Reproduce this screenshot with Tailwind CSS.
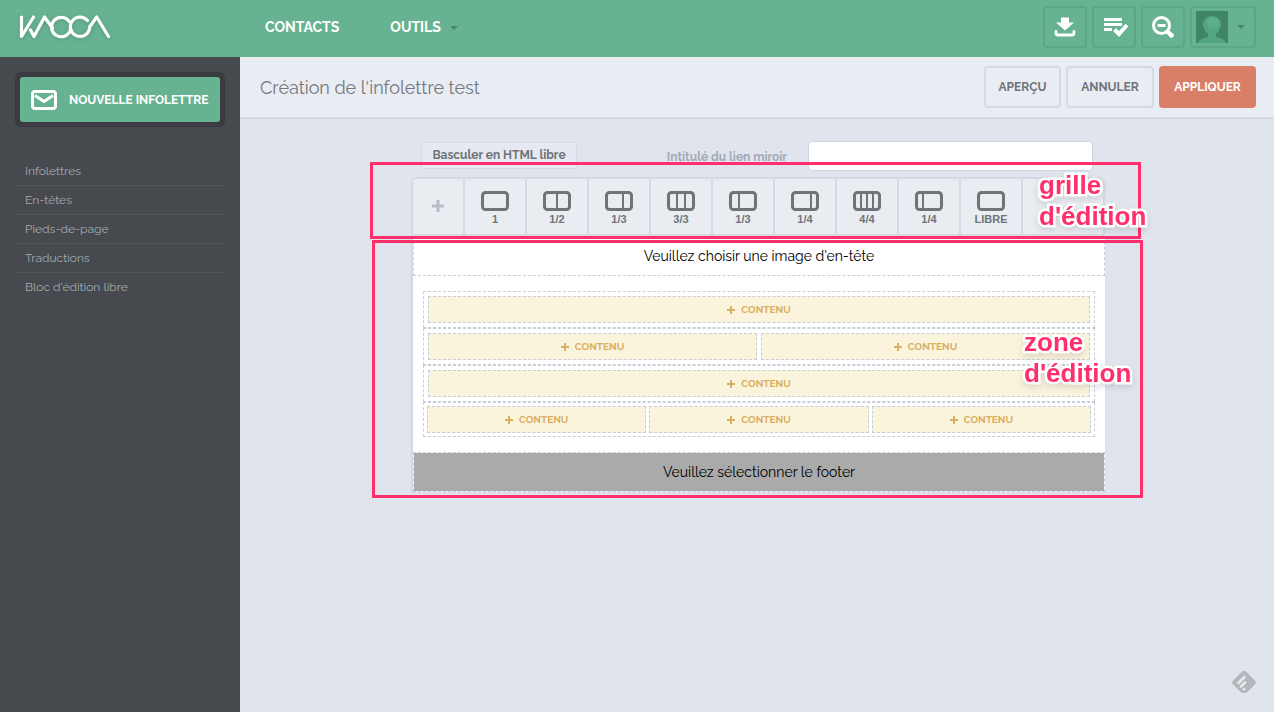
<!DOCTYPE html>
<html lang="fr">

<head>
    <meta charset="UTF-8">
    <meta name="viewport" content="width=device-width, initial-scale=1.0">
    <title>Création de l'infolettre | Kacoa</title>
    <script src="https://cdn.jsdelivr.net/npm/@tailwindcss/browser@4"></script>
</head>

<body class="min-h-screen flex flex-col bg-[#e0e4ec] font-['Raleway','Lato',sans-serif]">
    <!-- Top bar -->
    <header class="h-[57px] shrink-0 flex items-center bg-[#67b391] text-white pr-[18px]">
        <a href="#" aria-label="Kacoa" class="w-60 pl-[18px] mb-1 shrink-0">
            <svg class="w-24 h-7 drop-shadow-sm" viewBox="18 12 96 28" fill="none" stroke="currentColor"
                stroke-width="3.2" stroke-linecap="round" stroke-linejoin="round">
                <path d="M21.500 16v19.500L33.500 16M30.500 29l3.500 6.500L44.500 16l8 11" />
                <path d="M69.200 20.500A9.700 9.700 0 1 0 70.700 28" />
                <path d="M87.500 19.500A9.700 9.700 0 1 0 89.600 27.500V26L96.700 16l11.800 19.500" />
            </svg>
        </a>
        <nav class="flex-1 flex items-center gap-[51px] pl-[25px] pb-[2px] text-[14px] font-bold">
            <a href="#">CONTACTS</a>
            <a href="#" class="flex items-center gap-[9px]">OUTILS
                <svg class="w-2 h-1 text-[#438a69]" viewBox="0 0 8 4" fill="currentColor"><path d="M0 0h8L4 4z" /></svg>
            </a>
        </nav>
        <div class="flex gap-[5px] -mt-[3px]">
            <button aria-label="Télécharger" class="w-11 h-[42px] flex items-center justify-center rounded border-2 border-[#5ca783]">
                <svg class="w-[22px] h-5" viewBox="0 0 22 20" fill="currentColor">
                    <path d="M7 0.500h8v5h5L11 13.500 2 5.500h5z" />
                    <path d="M2 14.500v1.500a2 2 0 0 0 2 2h14a2 2 0 0 0 2-2v-1.500" fill="none" stroke="currentColor" stroke-width="2.800" stroke-linecap="round" />
                </svg>
            </button>
            <button aria-label="Tâches" class="w-11 h-[42px] flex items-center justify-center pl-[3px] rounded border-2 border-[#5ca783]">
                <svg class="w-[26px] h-5" viewBox="0 0 26 20" fill="currentColor">
                    <path d="M1 1h18v3H1zM1 6h18v3H1zM1 11h8v3H1z" />
                    <path d="M11.500 12.500l4.500 4.500 8-9" fill="none" stroke="currentColor" stroke-width="4" />
                </svg>
            </button>
            <button aria-label="Rechercher" class="w-11 h-[42px] flex items-center justify-center rounded border-2 border-[#5ca783]">
                <svg class="w-[22px] h-[22px]" viewBox="0 0 22 22" fill="none" stroke="currentColor">
                    <circle cx="9.500" cy="9.500" r="8" stroke-width="3" />
                    <path d="M5.500 9.500h8" stroke-width="3" />
                    <path d="M15.500 15.500l5.500 5.500" stroke-width="4.500" />
                </svg>
            </button>
            <button aria-label="Mon compte" class="w-[66px] h-[42px] flex items-center gap-[9px] pl-1 rounded border-2 border-[#5ca783]">
                <svg class="w-8 h-8" viewBox="0 0 32 32">
                    <path fill="#3f8565" d="M0 0h32v32H0z" />
                    <path fill="#53a682" d="M2 32c2-4 6-5 10-6v-3c-3-3-5-6-5-10a9 8 0 0 1 18 0c0 4-2 7-5 10v3c4 1 8 2 10 6z" />
                    <circle cx="17" cy="12" r="6" fill="#5dae8b" />
                </svg>
                <svg class="w-2 h-1 text-[#438a69]" viewBox="0 0 8 4" fill="currentColor"><path d="M0 0h8L4 4z" /></svg>
            </button>
        </div>
    </header>

    <div class="flex-1 flex">
        <!-- Sidebar -->
        <aside class="w-60 shrink-0 bg-[#46494e] p-[15px]">
            <div class="rounded-md bg-[#3b3c41] p-[5px]">
                <button class="w-full h-[45px] flex items-center gap-3 pl-[11px] rounded-[3px] bg-[#67b391] text-white text-[12px] font-bold whitespace-nowrap">
                    <svg class="w-[26px] h-5 shrink-0" viewBox="0 0 26 20" fill="none" stroke="currentColor" stroke-width="3" stroke-linejoin="round">
                        <rect x="1.500" y="1.500" width="23" height="17" rx="2.500" />
                        <path d="M4 5.500l9 6 9-6" />
                    </svg>
                    NOUVELLE INFOLETTRE
                </button>
            </div>
            <nav class="mt-[30px] flex flex-col divide-y divide-[#505358] text-[12px] leading-7 text-[#a5a9ae]">
                <a href="#" class="px-[10px]">Infolettres</a>
                <a href="#" class="px-[10px]">En-têtes</a>
                <a href="#" class="px-[10px]">Pieds-de-page</a>
                <a href="#" class="px-[10px]">Traductions</a>
                <a href="#" class="px-[10px]">Bloc d'édition libre</a>
            </nav>
        </aside>

        <main class="flex-1 min-w-0">
            <div class="h-[62px] flex items-center justify-between pl-5 pr-[18px] bg-[#e9ecf2] border-b-2 border-[#d3dae3]">
                <h1 class="text-[18px] text-[#75797d]">Création de l'infolettre test</h1>
                <div class="flex gap-[5px] text-[12px] font-bold text-[#6f7478]">
                    <button class="w-[77px] h-[42px] rounded border-2 border-[#d3dae3]">APERÇU</button>
                    <button class="w-[88px] h-[42px] rounded border-2 border-[#d3dae3]">ANNULER</button>
                    <button class="w-[97px] h-[42px] rounded bg-[#da7f67] text-white">APPLIQUER</button>
                </div>
            </div>

            <div class="pl-0.5 pt-[22px]">
                <div class="w-[694px] mx-auto">
                    <div class="flex items-center pl-[10px] pr-3 text-[12px] font-bold">
                        <button class="w-[156px] h-[27px] -mt-px pb-[2px] border border-[#d3dae3] bg-[#e6e9f1] text-[#6f7478]">Basculer en HTML libre</button>
                        <label for="mirror" class="ml-auto mr-[21px] mt-[2px] text-[#a3abb6]">Intitulé du lien miroir</label>
                        <input id="mirror" type="text" class="w-[285px] h-[30px] px-2 rounded border border-[#ccd6e3] bg-white">
                    </div>

                    <!-- Layout picker -->
                    <section class="relative mt-[6px]">
                        <div class="h-[59px] flex rounded-t-md border-2 border-[#d3dae3] bg-[#e9edf2] divide-x-2 divide-[#d3dae3] font-['Liberation_Sans',sans-serif] text-[11px] leading-3 font-bold text-[#6f7478]">
                            <button aria-label="Ajouter" class="w-[52px] flex items-center justify-center pb-px text-[#b6bec9]">
                                <svg class="w-3 h-3" viewBox="0 0 12 12" stroke="currentColor" stroke-width="3"><path d="M6 0v12M0 6h12" /></svg>
                            </button>
                            <button class="w-[62px] flex flex-col items-center justify-center gap-[2px] pt-[3px]">
                                <svg class="w-7 h-5" viewBox="0 0 28 20" fill="none" stroke="currentColor" stroke-width="3"><rect x="1.500" y="1.500" width="25" height="17" rx="3" /></svg>
                                1
                            </button>
                            <button class="w-[62px] flex flex-col items-center justify-center gap-[2px] pt-[3px]">
                                <svg class="w-7 h-5" viewBox="0 0 28 20" fill="none" stroke="currentColor" stroke-width="3"><rect x="1.500" y="1.500" width="25" height="17" rx="3" /><path d="M14 2v16" stroke-width="2" /></svg>
                                1/2
                            </button>
                            <button class="w-[62px] flex flex-col items-center justify-center gap-[2px] pt-[3px]">
                                <svg class="w-7 h-5" viewBox="0 0 28 20" fill="none" stroke="currentColor" stroke-width="3"><rect x="1.500" y="1.500" width="25" height="17" rx="3" /><path d="M18 2v16" stroke-width="2" /></svg>
                                1/3
                            </button>
                            <button class="w-[62px] flex flex-col items-center justify-center gap-[2px] pt-[3px]">
                                <svg class="w-7 h-5" viewBox="0 0 28 20" fill="none" stroke="currentColor" stroke-width="3"><rect x="1.500" y="1.500" width="25" height="17" rx="3" /><path d="M10 2v16M18 2v16" stroke-width="2" /></svg>
                                3/3
                            </button>
                            <button class="w-[62px] flex flex-col items-center justify-center gap-[2px] pt-[3px]">
                                <svg class="w-7 h-5" viewBox="0 0 28 20" fill="none" stroke="currentColor" stroke-width="3"><rect x="1.500" y="1.500" width="25" height="17" rx="3" /><path d="M10 2v16" stroke-width="2" /></svg>
                                1/3
                            </button>
                            <button class="w-[62px] flex flex-col items-center justify-center gap-[2px] pt-[3px]">
                                <svg class="w-7 h-5" viewBox="0 0 28 20" fill="none" stroke="currentColor" stroke-width="3"><rect x="1.500" y="1.500" width="25" height="17" rx="3" /><path d="M20 2v16" stroke-width="2" /></svg>
                                1/4
                            </button>
                            <button class="w-[62px] flex flex-col items-center justify-center gap-[2px] pt-[3px]">
                                <svg class="w-7 h-5" viewBox="0 0 28 20" fill="none" stroke="currentColor" stroke-width="3"><rect x="1.500" y="1.500" width="25" height="17" rx="3" /><path d="M8 2v16M14 2v16M20 2v16" stroke-width="2" /></svg>
                                4/4
                            </button>
                            <button class="w-[62px] flex flex-col items-center justify-center gap-[2px] pt-[3px]">
                                <svg class="w-7 h-5" viewBox="0 0 28 20" fill="none" stroke="currentColor" stroke-width="3"><rect x="1.500" y="1.500" width="25" height="17" rx="3" /><path d="M8 2v16" stroke-width="2" /></svg>
                                1/4
                            </button>
                            <button class="w-[62px] flex flex-col items-center justify-center gap-[2px] pt-[3px]">
                                <svg class="w-7 h-5" viewBox="0 0 28 20" fill="none" stroke="currentColor" stroke-width="3"><rect x="1.500" y="1.500" width="25" height="17" rx="3" /></svg>
                                LIBRE
                            </button>
                            <div class="flex-1"></div>
                        </div>
                        <!-- Annotation -->
                        <div class="absolute z-10 -top-[15px] -left-[41px] -right-[36px] h-[77px] border-3 border-[#ff2f6c] pointer-events-none"></div>
                        <p class="absolute z-20 -top-[7px] left-[628px] font-['Liberation_Sans',sans-serif] text-[26px] leading-[31px] font-bold whitespace-nowrap text-[#ff2f6c] [-webkit-text-stroke:5px_white] [paint-order:stroke_fill] drop-shadow-md">grille<br>d'édition</p>
                    </section>

                    <!-- Newsletter -->
                    <section class="relative">
                        <div class="bg-white border-l-2 border-[#d3dae3] text-[14px] text-black shadow-xs">
                            <div class="h-10 flex items-center justify-center pt-[2px] border border-t-0 border-dashed border-[#c5ced9]">Veuillez choisir une image d'en-tête</div>
                            <div class="px-[10px] py-[15px] text-[10px] font-bold text-[#d9ae5f]">
                                <div class="flex gap-1 p-1 border border-dashed border-[#c5ced9]">
                                    <button class="flex-1 h-[27px] flex items-center justify-center gap-[6px] border border-dashed border-[#c5ced9] bg-[#fbf4dd]"><svg class="w-2 h-2" viewBox="0 0 8 8" stroke="currentColor" stroke-width="2"><path d="M4 0v8M0 4h8" /></svg>CONTENU</button>
                                </div>
                                <div class="flex gap-1 p-1 border border-dashed border-[#c5ced9]">
                                    <button class="flex-1 h-[27px] flex items-center justify-center gap-[6px] border border-dashed border-[#c5ced9] bg-[#fbf4dd]"><svg class="w-2 h-2" viewBox="0 0 8 8" stroke="currentColor" stroke-width="2"><path d="M4 0v8M0 4h8" /></svg>CONTENU</button>
                                    <button class="flex-1 h-[27px] flex items-center justify-center gap-[6px] border border-dashed border-[#c5ced9] bg-[#fbf4dd]"><svg class="w-2 h-2" viewBox="0 0 8 8" stroke="currentColor" stroke-width="2"><path d="M4 0v8M0 4h8" /></svg>CONTENU</button>
                                </div>
                                <div class="flex gap-1 p-1 border border-dashed border-[#c5ced9]">
                                    <button class="flex-1 h-[27px] flex items-center justify-center gap-[6px] border border-dashed border-[#c5ced9] bg-[#fbf4dd]"><svg class="w-2 h-2" viewBox="0 0 8 8" stroke="currentColor" stroke-width="2"><path d="M4 0v8M0 4h8" /></svg>CONTENU</button>
                                </div>
                                <div class="flex gap-[3px] p-[3px] border border-dashed border-[#c5ced9]">
                                    <button class="flex-1 h-[27px] flex items-center justify-center gap-[6px] border border-dashed border-[#c5ced9] bg-[#fbf4dd]"><svg class="w-2 h-2" viewBox="0 0 8 8" stroke="currentColor" stroke-width="2"><path d="M4 0v8M0 4h8" /></svg>CONTENU</button>
                                    <button class="flex-1 h-[27px] flex items-center justify-center gap-[6px] border border-dashed border-[#c5ced9] bg-[#fbf4dd]"><svg class="w-2 h-2" viewBox="0 0 8 8" stroke="currentColor" stroke-width="2"><path d="M4 0v8M0 4h8" /></svg>CONTENU</button>
                                    <button class="flex-1 h-[27px] flex items-center justify-center gap-[6px] border border-dashed border-[#c5ced9] bg-[#fbf4dd]"><svg class="w-2 h-2" viewBox="0 0 8 8" stroke="currentColor" stroke-width="2"><path d="M4 0v8M0 4h8" /></svg>CONTENU</button>
                                </div>
                            </div>
                            <div class="h-10 flex items-center justify-center border border-dashed border-[#c5ced9] bg-[#aaaaaa] bg-clip-padding">Veuillez sélectionner le footer</div>
                        </div>
                        <!-- Annotation -->
                        <div class="absolute z-10 top-1 -left-[39px] -right-[38px] h-[258px] border-3 border-[#ff2f6c] pointer-events-none"></div>
                        <p class="absolute z-20 top-[91px] left-[613px] font-['Liberation_Sans',sans-serif] text-[26px] leading-[31px] font-bold whitespace-nowrap text-[#ff2f6c] [-webkit-text-stroke:5px_white] [paint-order:stroke_fill] drop-shadow-md">zone<br>d'édition</p>
                    </section>
                </div>
            </div>
        </main>
    </div>

    <!-- Feedback badge -->
    <a href="#" aria-label="Feedback" class="fixed bottom-[18px] right-[18px]">
        <svg class="w-6 h-6" viewBox="0 0 24 24">
            <path fill="#b3b7bc" d="M10 1.700a3 3 0 0 1 4 0l9 9a2.500 2.500 0 0 1 0 3.600L16 21.500a4 4 0 0 1-3 1.500h-2a4 4 0 0 1-3-1.500L1 14.300a2.500 2.500 0 0 1 0-3.600z" />
            <path d="M6.500 13l6-6M9 16.500l4-4M12 19.200l.2-.2" stroke="#e6e9ee" stroke-width="2.600" stroke-linecap="round" />
        </svg>
    </a>
</body>

</html>
